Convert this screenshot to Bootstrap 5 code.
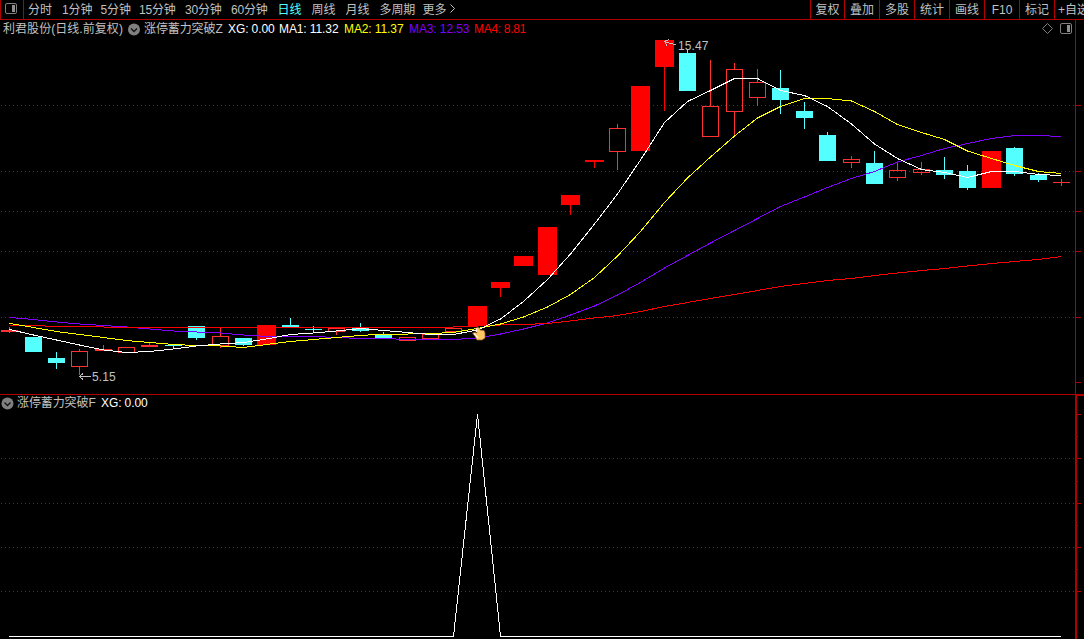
<!DOCTYPE html>
<html lang="zh-CN">
  <head>
    <meta charset="UTF-8">
    <meta name="viewport" content="width=device-width, initial-scale=1.0">
    <title>利君股份 日线</title>
    <link rel="stylesheet" href="https://cdn.jsdelivr.net/npm/bootstrap@5.3.0/dist/css/bootstrap.min.css">
    <style>
      body {
        background: #000;
        color: #c0c0c0;
        font-family: "Liberation Sans", "Noto Sans CJK SC", sans-serif;
        font-size: 12px;
        line-height: 18px;
      }
      svg { display: block; flex: none; }
      .toolbar { height: 20px; border-bottom: 1px solid #b00000; border-left: 1px solid #b00000; }
      .layout-btn { width: 23px; border-right: 1px solid #b00000; padding: 3px 0 0 4px; }
      .periods { padding-left: 4px; }
      .periods a, .tools a { height: 19px; line-height: 20px; }
      .periods a { color: inherit; text-decoration: none; flex: none; width: 34px; letter-spacing: -.1px; }
      .periods .w-3c { width: 38.5px; }
      .periods .w-4c { width: 46px; letter-spacing: -.2px; }
      .periods .w-zq { width: 43px; }
      .periods .w-more { width: 40px; }
      .periods .current { color: #54ffff; margin-left: .5px; }
      .tools { width: 274px; }
      .tools a { color: inherit; text-decoration: none; flex: none; width: 35px; text-align: center; border-left: 1px solid #b00000; }
      .tools a:first-child { width: 34px; }
      .tools a:last-child { width: 30px; text-align: left; padding-left: 3px; }
      .info { height: 18px; padding-left: 3px; }
      .info span { flex: none; }
      .info-main { padding-right: 3px; }
      .i-stock { width: 125px; letter-spacing: .05px; }
      .i-name { width: 84px; margin-left: 3px; letter-spacing: -.1px; }
      .i-xg { width: 51px; color: #fff; letter-spacing: -.1px; }
      .i-ma { width: 65px; letter-spacing: -.1px; }
      .c-ma1 { color: #fff; }
      .c-ma2 { color: #ff0; }
      .c-ma3 { color: #8000ff; }
      .c-ma4 { color: #f00; letter-spacing: -.3px; }
      .plot { width: 1075px; }
      .panel-main { height: 374px; }
      .panel-sub { height: 245px; border-top: 1px solid #b00000; }
      .info-sub { height: 17px; padding-left: 1px; line-height: 17px; }
      svg text { fill: #c0c0c0; font-size: 12px; letter-spacing: .1px; }
    </style>
  </head>
  <body class="vh-100 overflow-hidden d-flex flex-column">
    <!-- 顶部工具栏 -->
    <nav class="toolbar d-flex flex-shrink-0">
      <div class="layout-btn flex-shrink-0">
        <svg width="13" height="12"><rect x=".5" y=".5" width="11" height="10" rx="1.5" fill="none" stroke="#808080"/><rect x="7" y="2" width="3" height="7" fill="#909090"/></svg>
      </div>
      <div class="periods d-flex flex-grow-1">
        <a href="#">分时</a>
        <a href="#" class="w-3c">1分钟</a>
        <a href="#" class="w-3c">5分钟</a>
        <a href="#" class="w-4c">15分钟</a>
        <a href="#" class="w-4c">30分钟</a>
        <a href="#" class="w-4c">60分钟</a>
        <a href="#" class="current">日线</a>
        <a href="#">周线</a>
        <a href="#">月线</a>
        <a href="#" class="w-zq">多周期</a>
        <a href="#" class="w-more d-flex text-nowrap">更多
          <svg class="ms-1" width="6" height="18"><path d="M.5 4.5L4.5 8.5L.5 12.5" fill="none" stroke="#c0c0c0"/></svg>
        </a>
      </div>
      <div class="tools d-flex flex-shrink-0">
        <a href="#">复权</a>
        <a href="#">叠加</a>
        <a href="#">多股</a>
        <a href="#">统计</a>
        <a href="#">画线</a>
        <a href="#">F10</a>
        <a href="#">标记</a>
        <a href="#" class="text-nowrap overflow-hidden">+自选</a>
      </div>
    </nav>

    <!-- 主图 -->
    <section class="panel-main d-flex flex-shrink-0">
      <div class="plot flex-shrink-0">
        <div class="info info-main d-flex align-items-center">
          <span class="i-stock">利君股份(日线.前复权)</span>
          <svg width="13" height="13"><circle cx="6" cy="6.5" r="6" fill="#808080"/><path d="M3 5.5L6 8.5L9 5.5" fill="none" stroke="#111" stroke-width="1.3"/></svg>
          <span class="i-name">涨停蓄力突破Z</span>
          <span class="i-xg">XG: 0.00</span>
          <span class="i-ma c-ma1">MA1: 11.32</span>
          <span class="i-ma c-ma2">MA2: 11.37</span>
          <span class="i-ma c-ma3">MA3: 12.53</span>
          <span class="i-ma c-ma4">MA4: 8.81</span>
          <svg class="ms-auto" width="30" height="12"><path d="M5.5 .5L10.5 5.5L5.5 10.5L.5 5.5Z" fill="none" stroke="#808080"/><rect x="18.5" y=".5" width="11" height="10" rx="1.5" fill="none" stroke="#808080"/><rect x="25" y="2" width="3" height="7" fill="#909090"/></svg>
        </div>
        <svg id="kline" width="1075" height="356" viewBox="0 38 1075 356" shape-rendering="crispEdges"></svg>
      </div>
      <svg id="axisMain" width="9" height="374" viewBox="0 20 9 374" shape-rendering="crispEdges"></svg>
    </section>

    <!-- 副图 -->
    <section class="panel-sub d-flex flex-shrink-0">
      <div class="plot flex-shrink-0">
        <div class="info info-sub d-flex align-items-center">
          <svg width="13" height="13"><circle cx="6.5" cy="6.5" r="6" fill="#808080"/><path d="M3.5 5.5L6.5 8.5L9.5 5.5" fill="none" stroke="#111" stroke-width="1.3"/></svg>
          <span class="i-name">涨停蓄力突破F</span>
          <span class="i-xg">XG: 0.00</span>
        </div>
        <svg id="signal" width="1075" height="227" viewBox="0 412 1075 227" shape-rendering="crispEdges"></svg>
      </div>
      <svg id="axisSub" width="9" height="244" viewBox="0 395 9 244" shape-rendering="crispEdges"></svg>
    </section>

    <script src="https://cdn.jsdelivr.net/npm/bootstrap@5.3.0/dist/js/bootstrap.bundle.min.js"></script>
    <script>
      // [类型, 实体上, 实体下, 最高, 最低]  c:阴线 h:空心阳线 f:一字线 s:涨停
      const candles = [
        ['f',330,332,327,333], ['c',337,352,337,352], ['c',358,363,352,369], ['h',351,367,349,375],
        ['f',349,351,345,351], ['h',347,353,347,353], ['f',345,347,343,347], ['c',345,346,345,349],
        ['c',326,338,326,340], ['h',336,346,328,348], ['c',338,345,338,346], ['s',325,345,325,345],
        ['c',325,327,318,327], ['c',329,330,326,332], ['h',328,332,328,335], ['c',328,331,323,332],
        ['c',335,338,332,338], ['h',337,341,337,341], ['h',334,339,334,339], ['h',328,332,328,332],
        ['s',306,326,306,330], ['s',282,288,282,297], ['s',256,266,256,266], ['s',227,275,227,275],
        ['s',195,205,195,215], ['s',160,162,160,168], ['h',128,152,124,170], ['s',86,151,86,151],
        ['s',40,67,40,111], ['c',53,91,50,91], ['h',106,137,60,137], ['h',69,112,63,135],
        ['h',82,98,69,106], ['c',88,100,70,114], ['c',111,118,102,129], ['c',135,161,132,161],
        ['h',159,163,156,168], ['c',163,184,151,184], ['h',170,178,163,181], ['h',169,173,162,175],
        ['c',170,175,157,179], ['c',171,188,165,190], ['s',151,188,151,188], ['c',148,174,147,176],
        ['c',175,180,173,182], ['f',182,183,179,186]
      ];
      // 均线 (由下层到上层)
      const averages = [
        ['#8000ff', [317.5,319.5,322,324,325.5,327,329,331,332,333,335,336.5,336.5,336.5,337.5,338.5,338.5,339.5,339.5,339.5,338,334,329,323,315,306,295,282.5,268,255.5,243,230.5,218.5,206.5,197,187.5,178.5,171.5,162,155.5,148.5,143.5,138.5,135.5,135.5,136.5]],
        ['#ff0000', [325,325.5,326.5,326.5,327,327.5,327.5,327.5,327.5,327.5,327.5,327.5,327.5,327.5,327.5,327.5,327.5,327.5,327.5,327,326,325,324.5,323.5,321,318,315.5,311.5,306.5,302.5,298.5,294.5,290.5,286.5,283.5,280.5,278.5,275.5,273,270.5,268.5,266,263.5,261.5,259.5,256.5]],
        ['#ffff00', [323.5,327.5,331.5,334.5,337.5,340.5,342.5,344.5,345.5,346,347.5,344.5,341.5,339.5,337.5,335.5,334,334,333.5,332.5,328.5,324,317,307,294.5,277.5,256,231.5,202.5,178,157,136,118,106.5,98.5,98.5,101,111.5,124.5,132.5,139.5,151,158.5,165.5,171.5,173.5]],
        ['#ffffff', [329.5,335,340,345,350,352.5,351.5,349,346,344,342.5,339,334.5,333,331,328.5,330.5,332.5,334.5,334.5,330,319,301.5,279.5,254,224,194,160,122.5,101.5,90.5,78.5,78.5,90.5,95.5,106.5,124,144,158.5,169.5,172.5,177.5,171.5,171.5,174.5,175.5]]
      ];
      const xAt = i => Math.floor(9.77 + i * 23.37);
      const rect = (x, y, w, h, fill) => `<rect x="${x}" y="${y}" width="${w}" height="${h}" fill="${fill}"/>`;
      const polyline = (points, color) => `<polyline points="${points}" fill="none" stroke="${color}"/>`;
      const grid = ys => ys.map(y => `<path d="M1 ${y + .5}H1075" stroke="#981414" stroke-dasharray="1 3"/>`).join('');

      function drawCandle([type, top, bottom, high, low], i) {
        const x = xAt(i);
        const color = { c: '#54ffff', h: '#ff3232', f: '#ff3232', s: '#ff0000' }[type];
        let out = rect(x, high, 1, top - high, color) + rect(x, bottom, 1, low - bottom, color);
        if (type === 'h') {
          out += `<rect x="${x - 7.5}" y="${top + .5}" width="16" height="${bottom - top - 1}" fill="none" stroke="${color}"/>`;
        } else {
          const half = type === 's' ? 9 : 8;
          out += rect(x - half, top, half * 2 + 1, bottom - top, color);
        }
        // 一字线的影线会穿过实体
        if (type === 'f') out += rect(x, high, 1, low - high, color);
        return out;
      }

      let kline = grid([105, 171, 211, 251, 317]) + candles.map(drawCandle).join('');
      averages.forEach(([color, ys]) => {
        kline += polyline(ys.map((y, i) => `${xAt(i) + .5},${y}`).join(' '), color);
      });
      // 最高价、最低价标注
      kline += `<path d="M79 376.5H91M83 373.5L79.5 376.5L83 379.5M664 41.5L676 45M669 39.5L664.5 41.5L667 45.5" fill="none" stroke="#c0c0c0"/>
        <text x="92" y="381">5.15</text><text x="678" y="50">15.47</text>`;
      // 买入手势
      kline += `<g shape-rendering="auto"><path d="M476 328L479 327.5L480 330L484 330.5L485 333V338L482 340H477L475 336L472.5 333L475 332.5L477 333Z" fill="#ffc864" stroke="#a06028" stroke-width=".7"/>
        <path d="M476.5 328V332M474 333.5L478 338" stroke="#fff0d0" stroke-width="1.5"/></g>`;
      document.getElementById('kline').innerHTML = kline;

      document.getElementById('signal').innerHTML = grid([458, 503, 547, 591])
        + polyline('9,636.5 453.5,636.5 477.5,414 500.5,636.5 1061,636.5', '#ffffff');

      // 右侧坐标轴
      document.getElementById('axisMain').innerHTML = rect(0, 20, 1, 374, '#b00000')
        + [105, 171, 211, 251, 317, 382].map(y => rect(1, y, 5, 1, '#b00000')).join('');
      document.getElementById('axisSub').innerHTML = rect(0, 395, 2, 244, '#b00000') + rect(0, 395, 9, 1, '#b00000')
        + [414, 458, 503, 547, 591].map(y => rect(2, y, 4, 1, '#b00000')).join('')
        + [436, 481, 525, 569].map(y => rect(2, y, 1, 1, '#b00000')).join('');
    </script>
  </body>
</html>
